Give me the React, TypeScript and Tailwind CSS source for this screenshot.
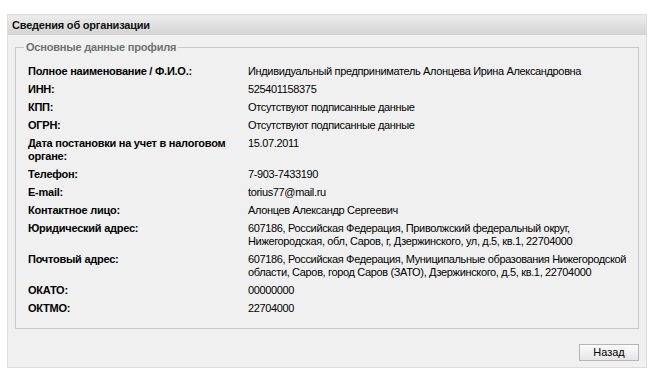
import React from "react";

const rows: { label: string; value: React.ReactNode }[] = [
  { label: "Полное наименование / Ф.И.О.:", value: "Индивидуальный предприниматель Алонцева Ирина Александровна" },
  { label: "ИНН:", value: "525401158375" },
  { label: "КПП:", value: "Отсутствуют подписанные данные" },
  { label: "ОГРН:", value: "Отсутствуют подписанные данные" },
  { label: "Дата постановки на учет в налоговом органе:", value: "15.07.2011" },
  { label: "Телефон:", value: "7-903-7433190" },
  { label: "E-mail:", value: "torius77@mail.ru" },
  { label: "Контактное лицо:", value: "Алонцев Александр Сергеевич" },
  {
    label: "Юридический адрес:",
    value: "607186, Российская Федерация, Приволжский федеральный округ, Нижегородская, обл, Саров, г, Дзержинского, ул, д.5, кв.1, 22704000",
  },
  {
    label: "Почтовый адрес:",
    value: "607186, Российская Федерация, Муниципальные образования Нижегородской области, Саров, город Саров (ЗАТО), Дзержинского, д.5, кв.1, 22704000",
  },
  { label: "ОКАТО:", value: "00000000" },
  { label: "ОКТМО:", value: "22704000" },
];

export default function App() {
  return (
    <div className="w-[654px] h-[380px] bg-white pt-[14px] pl-[7px] font-['Liberation_Sans',Arial,sans-serif] text-[11px] text-black">
      <div className="w-[640px] h-[354px] border border-[#dcdcdc] bg-[#f0f0f0] flex flex-col">
        <div className="h-[20px] bg-gradient-to-b from-[#ededed] to-[#d3d3d3] px-[4px] flex items-center font-bold text-[11px] text-[#111] tracking-[-0.2px]">
          Сведения об организации
        </div>
        <div className="flex-1 px-[7px] pt-[6px] flex flex-col">
          <fieldset className="border border-[#c9c9c9] pl-[12px] pr-[1px] pt-[5px] pb-[4px] h-[288px]">
            <legend className="-ml-[4px] px-[2px] font-bold text-[#707070] leading-[13px] tracking-[-0.2px]">
              Основные данные профиля
            </legend>
            <div className="flex flex-col gap-[5px] mt-[6px] tracking-[-0.35px]">
              {rows.map((r) => (
                <div key={r.label} className="grid grid-cols-[220px_1fr] leading-[13px]">
                  <div className="font-bold pr-[10px] tracking-[-0.25px]">{r.label}</div>
                  <div>{r.value}</div>
                </div>
              ))}
            </div>
          </fieldset>
          <div className="flex justify-end mt-[15px]">
            <button className="w-[60px] h-[17px] border border-[#b5b5b5] bg-gradient-to-b from-[#fbfbfb] to-[#e6e6e6] text-[11px] leading-[15px] text-black">
              Назад
            </button>
          </div>
        </div>
      </div>
    </div>
  );
}
